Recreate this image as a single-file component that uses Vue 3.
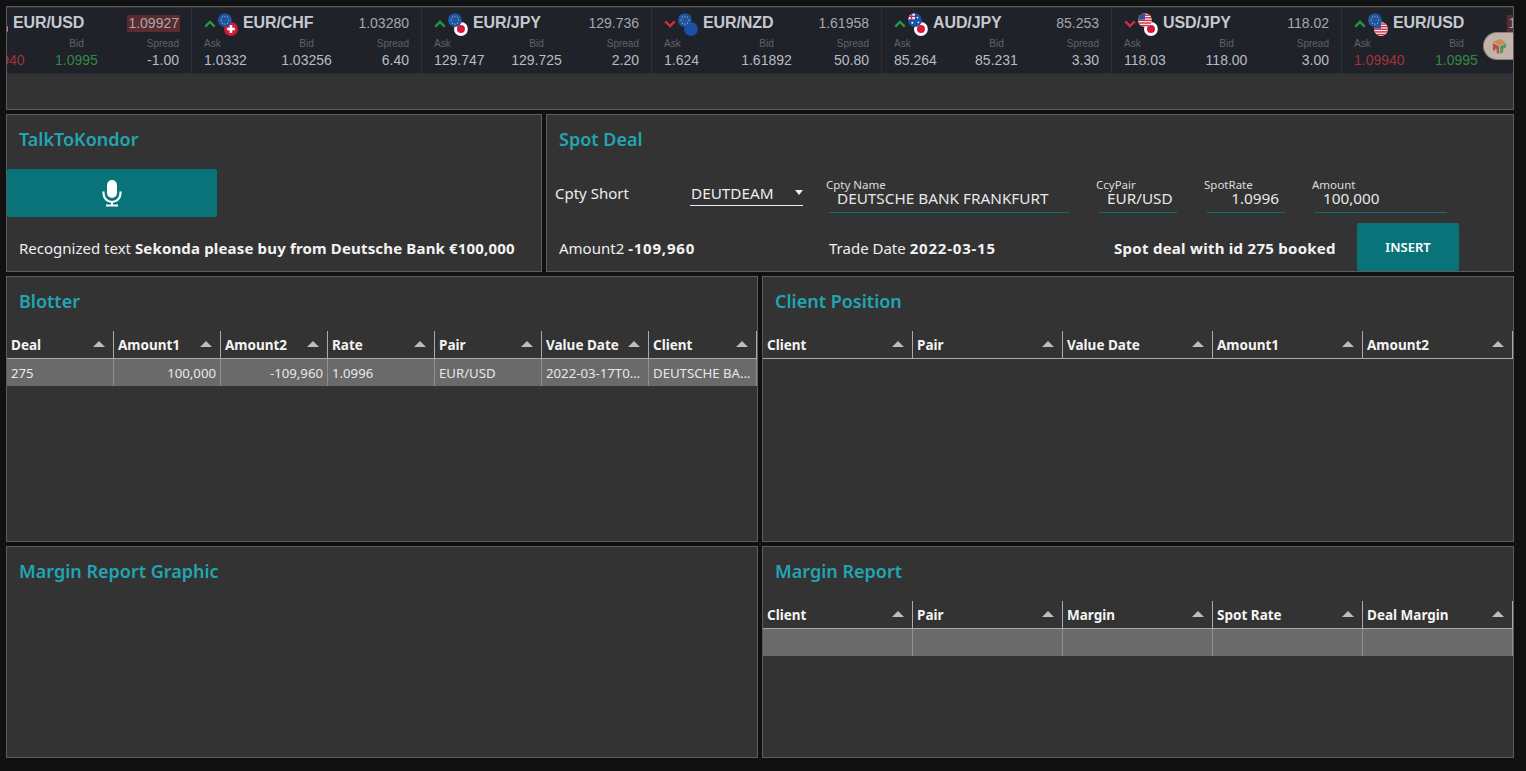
<script setup>
const tickers = [
  { pair: 'EUR/USD', base: 'eur', quote: 'usd', dir: 'up', price: '1.09927', ask: '1.09940', bid: '1.0995', spread: '-1.00', hot: true },
  { pair: 'EUR/CHF', base: 'eur', quote: 'chf', dir: 'up', price: '1.03280', ask: '1.0332', bid: '1.03256', spread: '6.40' },
  { pair: 'EUR/JPY', base: 'eur', quote: 'jpy', dir: 'up', price: '129.736', ask: '129.747', bid: '129.725', spread: '2.20' },
  { pair: 'EUR/NZD', base: 'eur', quote: 'nzd', dir: 'down', price: '1.61958', ask: '1.624', bid: '1.61892', spread: '50.80' },
  { pair: 'AUD/JPY', base: 'aud', quote: 'jpy', dir: 'up', price: '85.253', ask: '85.264', bid: '85.231', spread: '3.30' },
  { pair: 'USD/JPY', base: 'usd', quote: 'jpy', dir: 'down', price: '118.02', ask: '118.03', bid: '118.00', spread: '3.00' },
  { pair: 'EUR/USD', base: 'eur', quote: 'usd', dir: 'up', price: '1.09927', ask: '1.09940', bid: '1.0995', spread: '-1.00', hot: true }
]
const stars = [[8, 3.5], [11, 4.5], [12.5, 8], [11, 11.5], [8, 12.5], [5, 11.5], [3.5, 8], [5, 4.5]]
const stripes = [1.5, 4.5, 7.5, 10.5, 13.5]

const blotterCols = ['Deal', 'Amount1', 'Amount2', 'Rate', 'Pair', 'Value Date', 'Client']
const blotterRow = [
  { t: '275' }, { t: '100,000', r: true }, { t: '-109,960', r: true }, { t: '1.0996' },
  { t: 'EUR/USD' }, { t: '2022-03-17T00:00:00' }, { t: 'DEUTSCHE BANK FRANKFURT' }
]
const positionCols = ['Client', 'Pair', 'Value Date', 'Amount1', 'Amount2']
const marginCols = ['Client', 'Pair', 'Margin', 'Spot Rate', 'Deal Margin']
const marginRow = [{ t: '' }, { t: '' }, { t: '' }, { t: '' }, { t: '' }]
</script>

<template>
  <div class="page">
    <section class="panel ticker-panel">
      <div class="strip">
        <div class="track">
          <div v-for="(x, i) in tickers" :key="i" class="tick">
            <div class="tick-head">
              <svg class="arrow" :class="x.dir" viewBox="0 0 14 9" width="12" height="8">
                <path v-if="x.dir === 'up'" d="M1.500 7.500 7 2l5.500 5.500" />
                <path v-else d="M1.500 1.500 7 7l5.500-5.500" />
              </svg>
              <svg class="flags" viewBox="0 0 23 26" width="20" height="23">
                <defs>
                  <clipPath :id="'c' + i"><circle cx="8" cy="8" r="8" /></clipPath>
                </defs>
                <g v-for="(code, n) in [x.quote, x.base]" :key="n" :transform="n === 0 ? 'translate(6.9 10.200)' : 'translate(0 0)'">
                  <g :clip-path="`url(#c${i})`">
                    <template v-if="code === 'eur'">
                      <rect width="16" height="16" fill="#1c55a8" />
                      <circle v-for="(s, k) in stars" :key="k" :cx="s[0]" :cy="s[1]" r=".7" fill="#d9c24e" />
                    </template>
                    <template v-else-if="code === 'chf'">
                      <rect width="16" height="16" fill="#d8173a" />
                      <path d="M6.500 3.500h3v3h3v3h-3v3h-3v-3h-3v-3h3z" fill="#fff" />
                    </template>
                    <template v-else-if="code === 'jpy'">
                      <rect width="16" height="16" fill="#fff" />
                      <circle cx="8" cy="8" r="4.600" fill="#d8173a" />
                    </template>
                    <template v-else-if="code === 'nzd'">
                      <rect width="16" height="16" fill="#1b4fa5" />
                    </template>
                    <template v-else-if="code === 'aud'">
                      <rect width="16" height="16" fill="#1c4fa6" />
                      <rect width="8" height="7" fill="#e8e8ee" />
                      <path d="M0 3h8v1.400H0zM3.200 0h1.600v7H3.200z" fill="#d8173a" />
                      <circle cx="11" cy="5" r="1" fill="#fff" />
                      <circle cx="12" cy="10.500" r="1" fill="#fff" />
                      <circle cx="5" cy="11" r="1.200" fill="#fff" />
                    </template>
                    <template v-else>
                      <rect width="16" height="16" fill="#f4f4f6" />
                      <rect v-for="y in stripes" :key="y" x="0" :y="y" width="16" height="1.600" fill="#d8283f" />
                      <rect width="8" height="7.500" fill="#2d4f9c" />
                    </template>
                  </g>
                </g>
              </svg>
              <span class="pair">{{ x.pair }}</span>
              <span class="price" :class="{ hot: x.hot }">{{ x.price }}</span>
            </div>
            <div class="quotes">
              <div class="q">
                <span class="q-label">Ask</span>
                <span class="q-val" :class="{ red: x.hot }">{{ x.ask }}</span>
              </div>
              <div class="q mid">
                <span class="q-label">Bid</span>
                <span class="q-val" :class="{ green: x.hot }">{{ x.bid }}</span>
              </div>
              <div class="q end">
                <span class="q-label">Spread</span>
                <span class="q-val">{{ x.spread }}</span>
              </div>
            </div>
          </div>
        </div>
      </div>
      <div class="widget">
        <svg viewBox="0 0 18 18" width="17" height="17">
          <path d="M9 1l7 3.500L9 8 2 4.500z" fill="#c9894a" />
          <path d="M2 5.500l6.500 3.300V17L6 15.700V12L4 11v3L2 13z" fill="#b3504a" />
          <path d="M9.500 8.800 16 5.500V10l-3 1.500V15l-3.500 2z" fill="#5c9560" />
        </svg>
      </div>
    </section>

    <div class="row r2">
      <section class="panel">
        <h2 class="title">TalkToKondor</h2>
        <button class="btn mic">
          <svg viewBox="0 0 20 28" width="20" height="28">
            <rect x="5" y="1" width="10" height="18" rx="5" fill="#fff" />
            <path d="M1.500 12.500v2a8.500 8.500 0 0 0 17 0v-2" fill="none" stroke="#fff" stroke-width="2.200" />
            <path d="M10 23v3.500M4 26.500h12" fill="none" stroke="#fff" stroke-width="2" />
          </svg>
        </button>
        <p class="line talk">Recognized text <b>Sekonda please buy from Deutsche Bank €100,000</b></p>
      </section>

      <section class="panel">
        <h2 class="title">Spot Deal</h2>
        <div class="form">
          <span class="cpty">Cpty Short</span>
          <div class="select">DEUTDEAM<i class="caret"></i></div>
          <div class="field f-name"><label>Cpty Name</label><div class="val">DEUTSCHE BANK FRANKFURT</div></div>
          <div class="field f-short"><label>CcyPair</label><div class="val">EUR/USD</div></div>
          <div class="field f-short"><label>SpotRate</label><div class="val right">1.0996</div></div>
          <div class="field f-amt"><label>Amount</label><div class="val">100,000</div></div>
        </div>
        <div class="actions">
          <p class="line a-amt">Amount2 <b class="num">-109,960</b></p>
          <p class="line a-date">Trade Date <b class="num">2022-03-15</b></p>
          <p class="line a-msg"><b>Spot deal with id 275 booked</b></p>
          <button class="btn insert">INSERT</button>
        </div>
      </section>
    </div>

    <div class="row r3">
      <section class="panel">
        <h2 class="title">Blotter</h2>
        <div class="grid cols7">
          <div v-for="c in blotterCols" :key="c" class="th">{{ c }}<i class="sort"></i></div>
          <div v-for="(c, i) in blotterRow" :key="i" class="td" :class="{ right: c.r }">{{ c.t }}</div>
        </div>
      </section>
      <section class="panel">
        <h2 class="title">Client Position</h2>
        <div class="grid cols5">
          <div v-for="c in positionCols" :key="c" class="th">{{ c }}<i class="sort"></i></div>
        </div>
      </section>
    </div>

    <div class="row r4">
      <section class="panel">
        <h2 class="title">Margin Report Graphic</h2>
      </section>
      <section class="panel">
        <h2 class="title">Margin Report</h2>
        <div class="grid cols5">
          <div v-for="c in marginCols" :key="c" class="th">{{ c }}<i class="sort"></i></div>
          <div v-for="(c, i) in marginRow" :key="i" class="td">{{ c.t }}</div>
        </div>
      </section>
    </div>
  </div>
</template>

<style>
html, body { margin: 0; background: #111; overflow: hidden; }
</style>

<style scoped>
.page {
  box-sizing: border-box;
  width: 1526px;
  height: 771px;
  padding: 6px 12px 0 6px;
  background: #111;
  display: flex;
  flex-direction: column;
  gap: 4px;
  font-family: "Noto Sans", "Open Sans", sans-serif;
  color: #eee;
}
.panel {
  box-sizing: border-box;
  background: #333;
  border: 1px solid #5c5c5c;
  min-width: 0;
  overflow: hidden;
}
.row { display: grid; gap: 4px; }
.r2 { grid-template-columns: 536px 968px; height: 158px; }
.r3 { grid-template-columns: 752px 752px; height: 266px; }
.r4 { grid-template-columns: 752px 752px; height: 212px; }

.ticker-panel { position: relative; height: 104px; padding-top: 1px; }
.strip { height: 66px; background: #1f2229; overflow: hidden; border-bottom: 1px solid #2a2d34; box-sizing: border-box; }
.track { display: flex; margin-left: -45px; width: max-content; font-family: "Liberation Sans", Arial, sans-serif; }
.tick { box-sizing: border-box; width: 230px; height: 66px; padding: 5px 11px 0 12px; border-right: 1px solid #2c2f37; }
.tick-head { display: flex; align-items: center; height: 20px; }
.arrow { fill: none; stroke-width: 2.800; flex: none; margin-top: 2px; }
.arrow.up { stroke: #1f9a46; }
.arrow.down { stroke: #cc2f43; }
.flags { flex: none; margin: 0 0 0 2px; overflow: visible; align-self: flex-start; }
.pair { font-size: 16px; font-weight: 700; color: #c6c9cf; margin-left: 5px; letter-spacing: -.1px; }
.price { margin-left: auto; font-size: 14px; color: #a6a8ad; padding: 0 1px; line-height: 17px; }
.price.hot { background: #5a2c30; }
.quotes { display: grid; grid-template-columns: 1fr auto 1fr; margin-top: 5px; padding-right: 1px; }
.q { display: flex; flex-direction: column; align-items: flex-start; }
.q.mid { align-items: center; }
.q.end { align-items: flex-end; }
.q-label { font-size: 10px; line-height: 12px; color: #5f636b; }
.q-val { font-size: 14px; line-height: 18px; margin-top: 1px; color: #babcc2; }
.q-val.red { color: #a4323c; }
.q-val.green { color: #2f8a45; }
.widget {
  position: absolute;
  right: 0;
  top: 25px;
  width: 30px;
  height: 28px;
  box-sizing: border-box;
  padding: 5px 0 0 7px;
  border-radius: 14px 0 0 14px;
  background: #c3b3aa;
  border: 1px solid #8d7f78;
  border-right: 0;
}

.title {
  margin: 0;
  height: 54px;
  padding-left: 12px;
  line-height: 48px;
  font-size: 18px;
  font-weight: 600;
  color: #20a6b2;
}
.btn {
  display: flex;
  align-items: center;
  justify-content: center;
  padding: 0;
  border: 0;
  border-radius: 2px;
  background: #08747a;
  color: #fff;
  font-family: inherit;
}
.mic { width: 210px; height: 48px; }
.line { margin: 0; font-size: 15px; line-height: 24px; color: #eee; white-space: nowrap; }
.line b { font-weight: 700; color: #f3f3f3; letter-spacing: .16px; }
.line b.num { letter-spacing: .8px; }
.a-msg b { letter-spacing: .27px; }
.talk { padding-left: 12px; margin-top: 19px; }

.form { display: flex; align-items: flex-start; height: 54px; padding-left: 8px; }
.cpty { width: 135px; font-size: 15px; line-height: 20px; margin-top: 14px; }
.select {
  position: relative;
  box-sizing: border-box;
  width: 113px;
  height: 23px;
  margin: 14px 26px 0 0;
  padding-left: 1px;
  line-height: 20px;
  font-size: 15.300px;
  border-bottom: 1px solid #eee;
}
.caret {
  position: absolute;
  right: 0;
  top: 7px;
  border: 4.500px solid transparent;
  border-top: 5px solid #eee;
  border-bottom: 0;
}
.field { box-sizing: border-box; margin: 10px 30px 0 0; height: 34px; border-bottom: 1px solid #0e6f75; }
.field label { display: block; margin-left: -3px; font-size: 11.500px; line-height: 12px; color: #ddd; }
.val { padding: 0 6px 0 8px; font-size: 15.300px; line-height: 14px; color: #e8e8e8; white-space: nowrap; }
.val.right { text-align: right; }
.f-name { width: 240px; }
.f-short { width: 78px; }
.f-amt { width: 132px; }

.actions { display: flex; align-items: flex-start; height: 48px; padding-left: 12px; }
.actions .line { margin-top: 13px; }
.a-amt { width: 270px; }
.a-date { width: 285px; }
.a-msg { width: 243px; }
.insert { width: 102px; height: 48px; font-size: 13px; font-weight: 600; padding-bottom: 1px; }

.grid { display: grid; }
.cols7 { grid-template-columns: repeat(6, 107px) 108px; }
.cols5 { grid-template-columns: repeat(5, 150px); }
.th {
  position: relative;
  box-sizing: border-box;
  height: 28px;
  padding-left: 4px;
  font-size: 13.500px;
  font-weight: 700;
  line-height: 28px;
  color: #f4f4f4;
  border-right: 1px solid #aaa;
  border-bottom: 1px solid #aaa;
  white-space: nowrap;
}
.sort {
  position: absolute;
  right: 8px;
  top: 10px;
  border: 6px solid transparent;
  border-bottom: 6px solid #bdbdbd;
  border-top: 0;
}
.td {
  box-sizing: border-box;
  height: 27px;
  padding: 1px 4px 0;
  background: #6a6a6a;
  border-right: 1px solid #8f8f8f;
  font-size: 13.200px;
  line-height: 27px;
  color: #e8e8e8;
  white-space: nowrap;
  overflow: hidden;
  text-overflow: ellipsis;
}
.td.right { text-align: right; }
</style>
